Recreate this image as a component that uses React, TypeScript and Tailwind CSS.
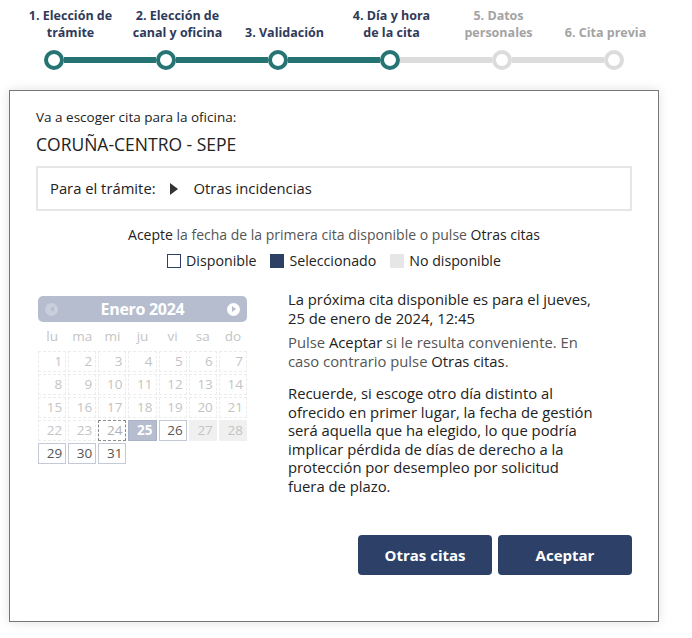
import React from "react";

const steps = [
  { label: ["1. Elección de", "trámite"], state: "done" },
  { label: ["2. Elección de", "canal y oficina"], state: "done" },
  { label: ["3. Validación"], state: "done" },
  { label: ["4. Día y hora", "de la cita"], state: "current" },
  { label: ["5. Datos", "personales"], state: "todo" },
  { label: ["6. Cita previa"], state: "todo" },
];

const teal = "bg-[#267373]";
const grey = "bg-[#dcdcdc]";

type DayKind = "off" | "today" | "selected" | "free" | "weekend";

const weeks: { n: number; kind: DayKind }[][] = [
  [1, 2, 3, 4, 5, 6, 7].map((n) => ({ n, kind: "off" as DayKind })),
  [8, 9, 10, 11, 12, 13, 14].map((n) => ({ n, kind: "off" as DayKind })),
  [15, 16, 17, 18, 19, 20, 21].map((n) => ({ n, kind: "off" as DayKind })),
  [
    { n: 22, kind: "off" },
    { n: 23, kind: "off" },
    { n: 24, kind: "today" },
    { n: 25, kind: "selected" },
    { n: 26, kind: "free" },
    { n: 27, kind: "weekend" },
    { n: 28, kind: "weekend" },
  ],
  [
    { n: 29, kind: "free" },
    { n: 30, kind: "free" },
    { n: 31, kind: "free" },
  ],
];

const dayClass: Record<DayKind, string> = {
  off: "border border-dashed border-[#ececec] text-[#c4c4c4]",
  today: "border border-dashed border-[#8a8a8a] text-[#b0b0b0]",
  selected: "border border-[#a9b2c6] bg-[#b5bdcf] text-white font-bold",
  free: "border border-[#c3c9d6] bg-white text-[#555]",
  weekend: "border border-[#f0f0f0] bg-[#f0f0f0] text-[#c4c4c4]",
};

// reminder text, broken the same way as the live page
const reminder = [
  "Recuerde, si escoge otro día distinto al",
  "ofrecido en primer lugar, la fecha de gestión",
  "será aquella que ha elegido, lo que podría",
  "implicar pérdida de días de derecho a la",
  "protección por desempleo por solicitud",
  "fuera de plazo.",
];

const Lines = ({ lines }: { lines: string[] }) => (
  <>
    {lines.map((line, i) => (
      <React.Fragment key={i}>
        {line}
        {i < lines.length - 1 && <br />}
      </React.Fragment>
    ))}
  </>
);

const Stepper = () => (
  <div className="pt-[8px]">
    {/* labels sit on their own grid, slightly offset from the dots */}
    <div className="flex ml-[17px]">
      {steps.map((s, i) => (
        <div key={i} className="w-[107px] h-[33px] flex items-end justify-center">
          <p
            className={`text-center whitespace-nowrap text-[12.5px] leading-[16.5px] font-bold ${
              s.state === "todo" ? "text-[#a3a3a3]" : "text-[#2f3a5a]"
            }`}
          >
            <Lines lines={s.label} />
          </p>
        </div>
      ))}
    </div>
    <div className="flex w-[672px] ml-[-2px] mt-[9px]">
      {steps.map((s, i) => {
        const leftOn = i > 0 && s.state !== "todo";
        const rightOn = s.state === "done";
        return (
          <div key={i} className="w-[112px] flex items-center">
            <div className={`flex-1 h-[6px] ${i === 0 ? "" : leftOn ? teal : grey}`} />
            <div
              className={`w-5 h-5 rounded-full border-[4px] bg-white ${
                s.state === "todo" ? "border-[#dcdcdc]" : "border-[#267373]"
              }`}
            />
            <div className={`flex-1 h-[6px] ${i === 5 ? "" : rightOn ? teal : grey}`} />
          </div>
        );
      })}
    </div>
  </div>
);

const Calendar = () => (
  <div className="w-[209px] ml-[2px] shrink-0">
    <div className="h-[26px] rounded-[5px] bg-[#b5bdcf] flex items-center justify-between px-[7px]">
      <span className="w-[13px] h-[13px] rounded-full bg-[#c9cfdc] flex items-center justify-center">
        <span className="w-0 h-0 border-y-[3px] border-y-transparent border-r-[4px] border-r-[#b5bdcf]" />
      </span>
      <span className="text-white font-bold text-[16px] tracking-[-0.3px]">Enero 2024</span>
      <span className="w-[13px] h-[13px] rounded-full bg-white flex items-center justify-center">
        <span className="w-0 h-0 border-y-[3px] border-y-transparent border-l-[4px] border-l-[#b5bdcf] ml-[1px]" />
      </span>
    </div>
    <div className="grid grid-cols-7 gap-[2px] mt-[3px] text-[13.5px] text-[#c4c4c4]">
      {["lu", "ma", "mi", "ju", "vi", "sa", "do"].map((d) => (
        <div key={d} className="h-[22px] flex items-center justify-center">
          {d}
        </div>
      ))}
    </div>
    <div className="grid grid-cols-7 gap-[2px] mt-[4px] text-[13.5px]">
      {weeks.flat().map((d) => (
        <div
          key={d.n}
          className={`h-[21px] flex items-center justify-end pr-[3px] ${dayClass[d.kind]}`}
        >
          {d.n}
        </div>
      ))}
    </div>
  </div>
);

export default function App() {
  return (
    <div className="w-[692px] h-[638px] bg-white text-[#222] font-['Open_Sans',sans-serif]">
      <Stepper />
      <div className="ml-[9px] mt-[20px] w-[650px] h-[532px] border border-[#777] shadow-[0_0_10px_rgba(0,0,0,0.12)] px-[26px] pt-[17px]">
        <p className="text-[13.5px] leading-[18px]">Va a escoger cita para la oficina:</p>
        <p className="text-[17.5px] leading-[20px] mt-[8px]">CORUÑA-CENTRO - SEPE</p>
        <div className="mt-[12px] h-[45px] border-2 border-[#e6e6e6] flex items-center px-[12px] text-[14.8px]">
          <span>Para el trámite:</span>
          <span className="ml-[14px] w-0 h-0 border-y-[6px] border-y-transparent border-l-[8px] border-l-[#333]" />
          <span className="ml-[16px]">Otras incidencias</span>
        </div>
        <p className="mt-[15px] text-center text-[14px] leading-[18px] text-[#555]">
          <span className="text-[#222]">Acepte</span> la fecha de la primera cita disponible o pulse{" "}
          <span className="text-[#222]">Otras citas</span>
        </p>
        <div className="mt-[8px] flex justify-center items-center gap-[14px] text-[14.2px] leading-[18px]">
          <span className="flex items-center gap-[5px]">
            <span className="w-[14px] h-[14px] border border-[#2e3f66] bg-white" />
            Disponible
          </span>
          <span className="flex items-center gap-[5px]">
            <span className="w-[14px] h-[14px] bg-[#2e3f66]" />
            Seleccionado
          </span>
          <span className="flex items-center gap-[5px]">
            <span className="w-[14px] h-[14px] bg-[#e6e6e6]" />
            No disponible
          </span>
        </div>
        <div className="flex mt-[26px] h-[239px]">
          <Calendar />
          <div className="ml-[41px] w-[330px] text-[14.8px] leading-[19px] -mt-[6px]">
            <p className="text-[#222]">
              La próxima cita disponible es para el jueves,
              <br />
              25 de enero de 2024, 12:45
            </p>
            <p className="mt-[5px] text-[#555]">
              Pulse <span className="text-[#222]">Aceptar</span> si le resulta conveniente. En
              <br />
              caso contrario pulse <span className="text-[#222]">Otras citas</span>.
            </p>
            <p className="mt-[13px] text-[#222] leading-[18.5px]">
              <Lines lines={reminder} />
            </p>
          </div>
        </div>
        <div className="flex justify-end gap-[6px]">
          <button className="w-[134px] h-[40px] rounded-[4px] bg-[#2d4068] text-white font-bold text-[15px]">
            Otras citas
          </button>
          <button className="w-[134px] h-[40px] rounded-[4px] bg-[#2d4068] text-white font-bold text-[15px]">
            Aceptar
          </button>
        </div>
      </div>
    </div>
  );
}
